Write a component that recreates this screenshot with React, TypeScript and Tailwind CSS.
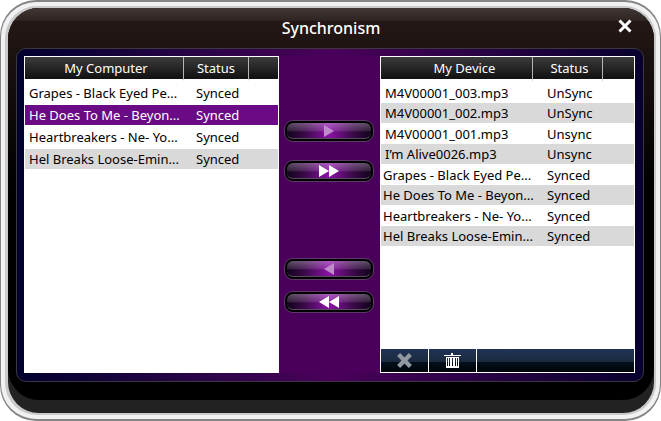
import { clsx } from 'clsx';

type Track = { title: string; status: string };

const computerTracks: Track[] = [
  { title: 'Grapes - Black Eyed Pe...', status: 'Synced' },
  { title: 'He Does To Me - Beyon...', status: 'Synced' },
  { title: 'Heartbreakers - Ne- Yo...', status: 'Synced' },
  { title: 'Hel Breaks Loose-Emin...', status: 'Synced' },
];

const deviceTracks: Track[] = [
  { title: 'M4V00001_003.mp3', status: 'UnSync' },
  { title: 'M4V00001_002.mp3', status: 'UnSync' },
  { title: 'M4V00001_001.mp3', status: 'Unsync' },
  { title: 'I’m Alive0026.mp3', status: 'Unsync' },
  { title: 'Grapes - Black Eyed Pe...', status: 'Synced' },
  { title: 'He Does To Me - Beyon...', status: 'Synced' },
  { title: 'Heartbreakers - Ne- Yo...', status: 'Synced' },
  { title: 'Hel Breaks Loose-Emin...', status: 'Synced' },
];

const headCell =
  'border-b-white bg-linear-to-b from-[#3c3c3c] to-[#111111] p-0 font-normal text-white';
const headSplit = 'border-r border-r-[#b5b5b5]';

function ComputerTable() {
  const head = clsx(headCell, 'h-6 border-b-2');

  return (
    <table className="w-full table-fixed border-separate border-spacing-0">
      <thead>
        <tr>
          <th className={clsx(head, headSplit, 'w-[159px] pl-1')}>My Computer</th>
          <th className={clsx(head, headSplit, 'w-[65px]')}>Status</th>
          <th className={head} />
        </tr>
      </thead>
      <tbody>
        {computerTracks.map((track, i) => (
          <tr
            key={track.title}
            className={clsx(
              i % 2 === 0 ? 'h-6' : 'h-5',
              i === 1 && 'bg-[#6a0a84] text-white',
              i === 3 && 'bg-[#d9d9d9]',
            )}
          >
            <td className="p-0 pl-1 whitespace-nowrap">{track.title}</td>
            <td className="p-0 pl-3 whitespace-nowrap">{track.status}</td>
            <td className="p-0" />
          </tr>
        ))}
      </tbody>
    </table>
  );
}

function DeviceTable() {
  const head = clsx(headCell, 'h-[25px] border-b-[3px]');

  return (
    <table className="w-full table-fixed border-separate border-spacing-0">
      <thead>
        <tr>
          <th className={clsx(head, headSplit, 'w-[152px] pl-4')}>My Device</th>
          <th className={clsx(head, headSplit, 'w-[70px] pl-1')}>Status</th>
          <th className={head} />
        </tr>
      </thead>
      <tbody>
        {deviceTracks.map((track, i) => (
          <tr key={i} className={i % 2 === 0 ? 'h-[21px]' : 'h-5 bg-[#d9d9d9]'}>
            <td
              className={clsx(
                'p-0 whitespace-nowrap',
                i < 4 ? 'pl-1' : 'pl-[2px]',
              )}
            >
              {track.title}
            </td>
            <td className="p-0 pl-[14px] whitespace-nowrap">{track.status}</td>
            <td className="p-0" />
          </tr>
        ))}
      </tbody>
    </table>
  );
}

type MoveButtonProps = {
  label: string;
  double?: boolean;
  back?: boolean;
};

function MoveButton({ label, double, back }: MoveButtonProps) {
  return (
    <button
      type="button"
      aria-label={label}
      className="flex h-[22px] w-full rounded-[9px] border border-[#5d3a68] bg-black p-[2px]"
    >
      <span className="flex h-full w-full items-center justify-center rounded-md border-b border-[#5a4a60] bg-[linear-gradient(to_bottom,rgba(255,255,255,0.3),rgba(255,255,255,0.12)_50%,transparent_60%),linear-gradient(to_right,#10031a,#3d0a4b_22%,#8a12a6_50%,#3d0a4b_78%,#10031a)]">
        <svg
          width="20"
          height="12"
          viewBox="0 0 20 12"
          className={clsx(back && 'rotate-180', double ? 'text-white' : 'text-[#c08bcb]')}
          fill="currentColor"
        >
          {double ? <path d="M0 0 10 6 0 12ZM10 0 20 6 10 12Z" /> : <path d="M5 0 15 6 5 12Z" />}
        </svg>
      </span>
    </button>
  );
}

const toolCell =
  'bg-[linear-gradient(to_bottom,#1f3355,#1c2a3e_55%,#020f1b_58%,#000509)]';

export default function App() {
  return (
    <main className="flex min-h-screen flex-col bg-white font-['Noto_Sans',sans-serif] text-[13px] leading-5 text-black">
      {/* Metal rim */}
      <div className="flex flex-1 rounded-[36px] bg-[#858585] p-px py-[2px]">
        <div className="flex flex-1 rounded-[35px] bg-[#f1f1f1] p-1">
          <div className="flex flex-1 rounded-[32px] bg-[#c9c9c9] p-[2px] pl-[3px]">
            {/* Casing */}
            <div className="flex flex-1 flex-col overflow-hidden rounded-[31px] bg-[#222222]">
              <div className="flex flex-1 flex-col rounded-b-[31px] bg-[linear-gradient(to_bottom,#231815,#000000_180px)]">
                <header className="flex h-10 items-center bg-[linear-gradient(to_bottom,#403634,#2d2321_13px,#231815_13px,#1f1411)] px-[22px]">
                  <span className="w-5" />
                  <h1 className="flex-1 text-center text-base font-medium text-white">Synchronism</h1>
                  <button type="button" aria-label="Close" className="flex w-5 justify-end pb-1 text-white">
                    <svg width="14" height="14" viewBox="0 0 14 14" stroke="currentColor" strokeWidth="3">
                      <path d="M1.5 1.5 12.5 12.5M12.5 1.5 1.5 12.5" />
                    </svg>
                  </button>
                </header>

                {/* Screen */}
                <div className="mr-[10px] mb-[18px] ml-2 flex flex-1 rounded-[10px] border border-[#3d3740] bg-linear-to-r from-[#02002e] via-[#4a005a] to-[#08002e] pt-[7px] pr-2 pb-2 pl-[7px]">
                  <section className="flex-1 border border-white bg-white">
                    <ComputerTable />
                  </section>

                  <div className="flex w-[101px] flex-col gap-[76px] bg-[#4a005a] pt-16 pr-[6px] pl-[5px]">
                    <div className="flex flex-col gap-[18px]">
                      <MoveButton label="Copy to device" />
                      <MoveButton label="Copy all to device" double />
                    </div>
                    <div className="flex flex-col gap-[11px]">
                      <MoveButton label="Copy to computer" back />
                      <MoveButton label="Copy all to computer" back double />
                    </div>
                  </div>

                  <section className="flex flex-1 flex-col border border-white bg-white">
                    <div className="flex-1">
                      <DeviceTable />
                    </div>
                    <div className="flex h-[23px] gap-px">
                      <button type="button" aria-label="Remove" className={clsx(toolCell, 'flex w-[47px] items-center justify-center')}>
                        <svg width="15" height="15" viewBox="0 0 14 14" stroke="#9198a0" strokeWidth="4">
                          <path d="M1.5 1.5 12.5 12.5M12.5 1.5 1.5 12.5" />
                        </svg>
                      </button>
                      <button type="button" aria-label="Delete" className={clsx(toolCell, 'flex w-[47px] items-center justify-center')}>
                        <svg width="17" height="15" viewBox="0 0 17 15" fill="white" shapeRendering="crispEdges">
                          <path d="M7 0H9V2H17V3H0V2H7Z" />
                          <path fillRule="evenodd" d="M2 4H15V15H2ZM3 5V13H4V5ZM5 5V13H6V5ZM8 5V13H9V5ZM11 5V13H12V5ZM13 5V13H14V5Z" />
                        </svg>
                      </button>
                      <div className={clsx(toolCell, 'flex-1')} />
                    </div>
                  </section>
                </div>
              </div>
              <div className="h-[13px]" />
            </div>
          </div>
        </div>
      </div>
    </main>
  );
}
